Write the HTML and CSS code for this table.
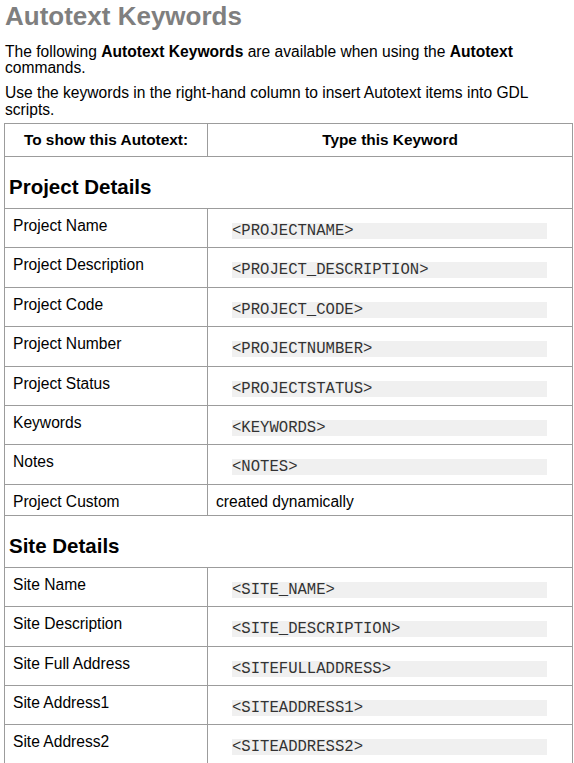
FILE: index.html
```html
<!DOCTYPE html>
<html lang="en">
<head>
<meta charset="utf-8">
<title>Autotext Keywords</title>
<link rel="stylesheet" href="styles.css">
</head>
<body>
<h1 class="title">Autotext Keywords</h1>
<p class="intro">The following <b>Autotext Keywords</b> are available when using the <b>Autotext</b> commands.</p>
<p class="intro second">Use the keywords in the right-hand column to insert Autotext items into GDL scripts.</p>
<table class="kw">
  <colgroup><col class="c1"><col class="c2"></colgroup>
  <thead>
    <tr><th>To show this Autotext:</th><th>Type this Keyword</th></tr>
  </thead>
  <tbody>
    <tr><td class="section" colspan="2">Project Details</td></tr>
    <tr><td class="label">Project Name</td><td class="kwcell"><div class="code">&lt;PROJECTNAME&gt;</div></td></tr>
    <tr><td class="label">Project Description</td><td class="kwcell"><div class="code">&lt;PROJECT_DESCRIPTION&gt;</div></td></tr>
    <tr><td class="label">Project Code</td><td class="kwcell"><div class="code">&lt;PROJECT_CODE&gt;</div></td></tr>
    <tr><td class="label">Project Number</td><td class="kwcell"><div class="code">&lt;PROJECTNUMBER&gt;</div></td></tr>
    <tr><td class="label">Project Status</td><td class="kwcell"><div class="code">&lt;PROJECTSTATUS&gt;</div></td></tr>
    <tr><td class="label">Keywords</td><td class="kwcell"><div class="code">&lt;KEYWORDS&gt;</div></td></tr>
    <tr><td class="label">Notes</td><td class="kwcell"><div class="code">&lt;NOTES&gt;</div></td></tr>
    <tr><td class="label">Project Custom</td><td class="label">created dynamically</td></tr>
    <tr><td class="section" colspan="2">Site Details</td></tr>
    <tr><td class="label">Site Name</td><td class="kwcell"><div class="code">&lt;SITE_NAME&gt;</div></td></tr>
    <tr><td class="label">Site Description</td><td class="kwcell"><div class="code">&lt;SITE_DESCRIPTION&gt;</div></td></tr>
    <tr><td class="label">Site Full Address</td><td class="kwcell"><div class="code">&lt;SITEFULLADDRESS&gt;</div></td></tr>
    <tr><td class="label">Site Address1</td><td class="kwcell"><div class="code">&lt;SITEADDRESS1&gt;</div></td></tr>
    <tr><td class="label">Site Address2</td><td class="kwcell"><div class="code">&lt;SITEADDRESS2&gt;</div></td></tr>
  </tbody>
</table>
</body>
</html>
```
FILE: styles.css
```css
html, body {
  background: #ffffff;
}
body {
  margin: 0;
  padding: 1px 1px 0 4px;
  font-family: "Liberation Sans", Arial, sans-serif;
  font-size: 15.6px;
  line-height: 16.5px;
  color: #000000;
}
.title {
  margin: 0 0 0 1px;
  font-size: 26px;
  line-height: 30px;
  font-weight: bold;
  color: #7f7f7f;
}
.intro {
  margin: 12.7px 0 0 1px;
}
.intro.second {
  margin-top: 8.5px;
}
.kw {
  margin-top: 4.8px;
  width: 100%;
  border-collapse: collapse;
  border: 1px solid #9c9c9c;
  table-layout: fixed;
}
.c1 { width: 203px; }
.kw th, .kw td {
  border: 1px solid #9c9c9c;
  vertical-align: top;
  text-align: left;
  line-height: 17px;
}
.kw th {
  padding: 7px 8px 8px;
  text-align: center;
  font-weight: bold;
  font-size: 15.4px;
}
.kw td.section {
  padding: 18px 4px 9px;
  font-size: 20.5px;
  line-height: 24px;
  font-weight: bold;
}
.kw td.label {
  padding: 8px 8px 5px;
}
.kw td.kwcell {
  padding: 0;
}
.code {
  margin: 14px 25px 8.4px 24px;
  height: 16px;
  background: #f0f0f0;
  font-family: "Liberation Mono", "Courier New", monospace;
  font-size: 15.6px;
  line-height: 16px;
  color: #333333;
  white-space: pre;
}
```
